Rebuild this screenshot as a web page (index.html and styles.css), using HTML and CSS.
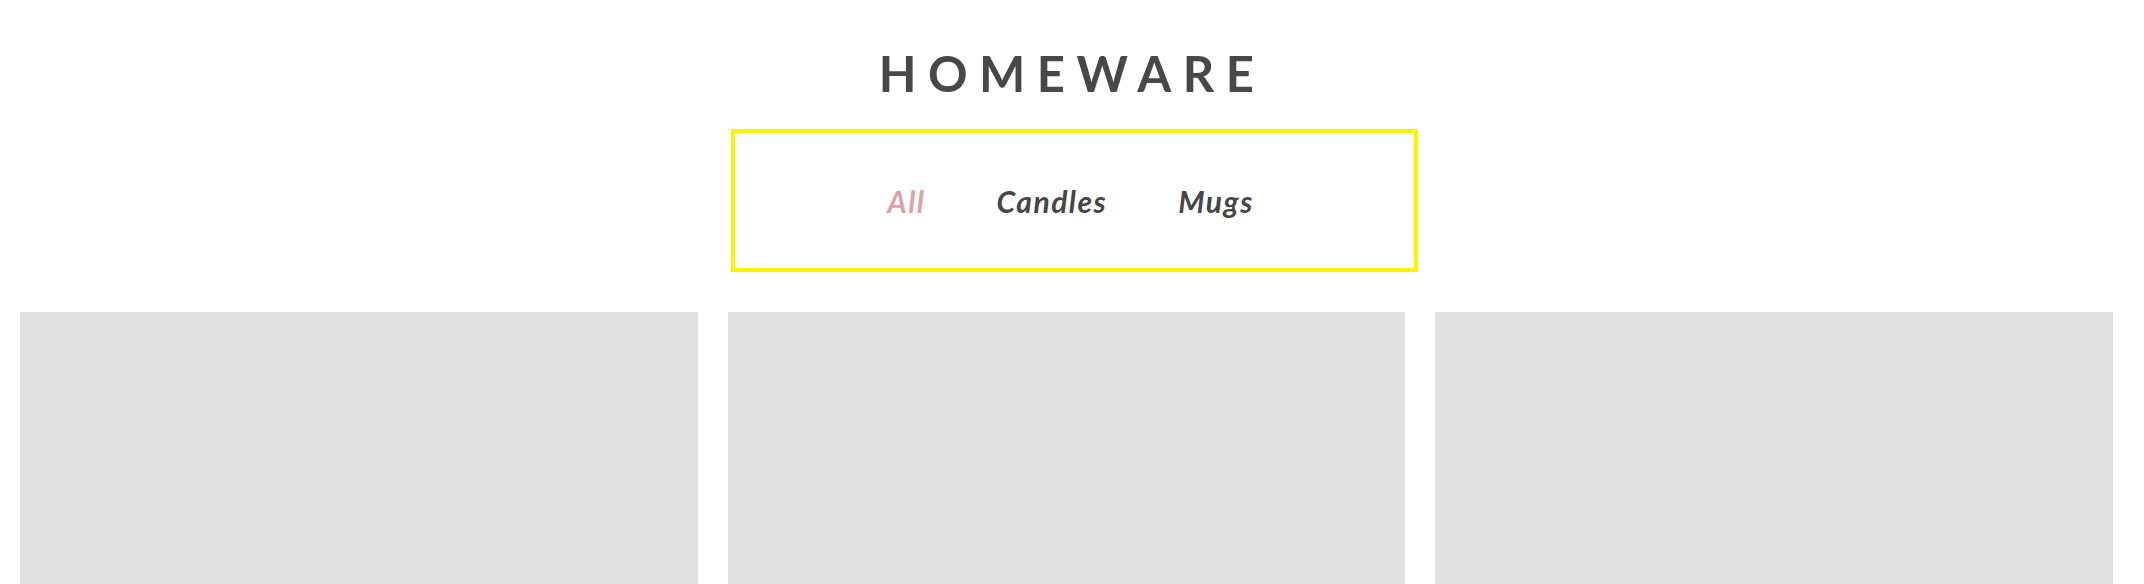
FILE: index.html
```html
<!DOCTYPE html>
<html lang="en">
<head>
<meta charset="utf-8">
<title>Homeware</title>
<link rel="stylesheet" href="styles.css">
</head>
<body>
<header class="header">
  <h1 class="title">HOMEWARE</h1>
  <nav class="filters">
    <a class="filter is-active" href="#">All</a>
    <a class="filter" href="#">Candles</a>
    <a class="filter" href="#">Mugs</a>
  </nav>
</header>
<main class="grid">
  <div class="card"></div>
  <div class="card"></div>
  <div class="card"></div>
</main>
</body>
</html>
```

FILE: styles.css
```css
html, body {
  margin: 0;
  padding: 0;
  background: #ffffff;
}

body {
  font-family: "Lato", "Noto Sans", "DejaVu Sans", sans-serif;
  color: #464646;
}

.header {
  display: flex;
  flex-direction: column;
  align-items: center;
  padding-top: 49px;
}

.title {
  margin: 0;
  font-size: 49px;
  line-height: 49px;
  font-weight: 700;
  letter-spacing: 11.5px;
  color: #484848;
}

.filters {
  box-sizing: border-box;
  margin-top: 31px;
  margin-left: 5px;
  padding-right: 8px;
  width: 687px;
  height: 143px;
  border: 4px solid #fff200;
  display: flex;
  align-items: center;
  justify-content: center;
  gap: 71px;
}

.filter {
  font-size: 30px;
  font-style: italic;
  font-weight: 700;
  letter-spacing: 1.5px;
  color: #464646;
  text-decoration: none;
}

.filter.is-active {
  color: #dba3a8;
}

.grid {
  display: grid;
  grid-template-columns: repeat(3, 1fr);
  gap: 30px;
  padding: 0 31px 0 20px;
  margin-top: 40px;
}

.card {
  height: 400px;
  background: #e0e0e0;
}
```
